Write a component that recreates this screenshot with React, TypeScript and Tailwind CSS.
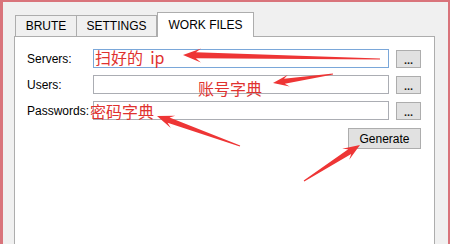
type Pt = [number, number];

// builds a tapered annotation arrow (tip first, then the thin tail)
function arrowPoints(tip: Pt, tail: Pt, len: number, half: number, shaft: number) {
  const dx = tip[0] - tail[0];
  const dy = tip[1] - tail[1];
  const m = Math.hypot(dx, dy);
  const d: Pt = [dx / m, dy / m];
  const n: Pt = [-d[1], d[0]];
  const at = (p: Pt, a: number, b: number): string =>
    `${(p[0] + d[0] * a + n[0] * b).toFixed(1)},${(p[1] + d[1] * a + n[1] * b).toFixed(1)}`;
  return [
    at(tip, 0, 0),
    at(tip, -len, half),
    at(tip, -len * 0.72, shaft),
    at(tail, 0, 0.6),
    at(tail, 0, -0.6),
    at(tip, -len * 0.72, -shaft),
    at(tip, -len, -half),
  ].join(" ");
}

const arrows: { tip: Pt; tail: Pt; len: number; half: number; shaft: number }[] = [
  { tip: [183, 55], tail: [380, 59], len: 18, half: 7, shaft: 3 },
  { tip: [273, 83], tail: [333, 74], len: 16, half: 6, shaft: 2.5 },
  { tip: [157, 116], tail: [240, 146], len: 17, half: 6.5, shaft: 2.8 },
  { tip: [360, 145], tail: [304, 181], len: 17, half: 6.5, shaft: 2.8 },
];

function Row({ label, focused }: { label: string; focused?: boolean }) {
  return (
    <div className="flex items-center h-[19px]">
      <span className="w-[66px] text-[12px] text-black leading-none">{label}</span>
      <div
        className={
          focused
            ? "w-[296px] h-[19px] bg-white border border-[#7aa7d9]"
            : "w-[296px] h-[19px] bg-white border border-[#abadb3]"
        }
      />
      <button className="ml-[7px] w-[25px] h-[18px] bg-[#e1e1e1] border border-[#adadad] text-[11px] font-bold leading-none text-[#222] flex items-center justify-center pt-[3px]">
        ...
      </button>
    </div>
  );
}

export default function App() {
  return (
    <div
      className="relative w-[450px] h-[244px] overflow-hidden bg-[#f0f0f0] border-t-2 border-l-[3px] border-r-[2px] border-[#d9747b]"
      style={{ fontFamily: '"Liberation Sans", Arial, sans-serif' }}
    >
      <div className="pl-[11px] pt-[10px] pr-[10px]">
        {/* tabs */}
        <div className="flex items-end h-[24px] pl-[1px]">
          <div className="w-[62px] h-[21px] border border-b-0 border-[#adadad] bg-[#f0f0f0] flex items-center justify-center text-[12px] text-black">
            BRUTE
          </div>
          <div className="w-[80px] h-[21px] border border-l-0 border-b-0 border-[#adadad] bg-[#f0f0f0] flex items-center justify-center text-[12px] text-black">
            SETTINGS
          </div>
          <div className="relative z-10 -mb-[1px] w-[97px] h-[25px] border border-b-0 border-[#adadad] bg-white flex items-center justify-center text-[12px] text-black">
            WORK FILES
          </div>
        </div>

        {/* panel */}
        <div className="w-[421px] h-[220px] bg-white border border-[#adadad] pl-[12px] pt-[12px] flex flex-col gap-[7px]">
          <Row label="Servers:" focused />
          <Row label="Users:" />
          <Row label="Passwords:" />
          <div className="flex pl-[321px] mt-[1px]">
            <button className="w-[73px] h-[21px] bg-[#e1e1e1] border border-[#adadad] text-[12px] text-black leading-none">
              Generate
            </button>
          </div>
        </div>
      </div>

      {/* annotations */}
      <div
        className="absolute left-[92px] top-[47px] text-[16px] text-[#e0322f] leading-none whitespace-pre"
        style={{ fontFamily: '"Noto Sans CJK SC", sans-serif' }}
      >
        {"扫好的  ip"}
      </div>
      <div
        className="absolute left-[195px] top-[78px] text-[16px] text-[#e0322f] leading-none"
        style={{ fontFamily: '"Noto Sans CJK SC", sans-serif' }}
      >
        账号字典
      </div>
      <div
        className="absolute left-[87px] top-[101px] text-[16px] text-[#e0322f] leading-none"
        style={{ fontFamily: '"Noto Sans CJK SC", sans-serif' }}
      >
        密码字典
      </div>
      <svg className="absolute left-[-3px] top-[-2px]" width="450" height="244" viewBox="0 0 450 244">
        {arrows.map((a, i) => (
          <polygon key={i} points={arrowPoints(a.tip, a.tail, a.len, a.half, a.shaft)} fill="#ee3535" />
        ))}
      </svg>
    </div>
  );
}
